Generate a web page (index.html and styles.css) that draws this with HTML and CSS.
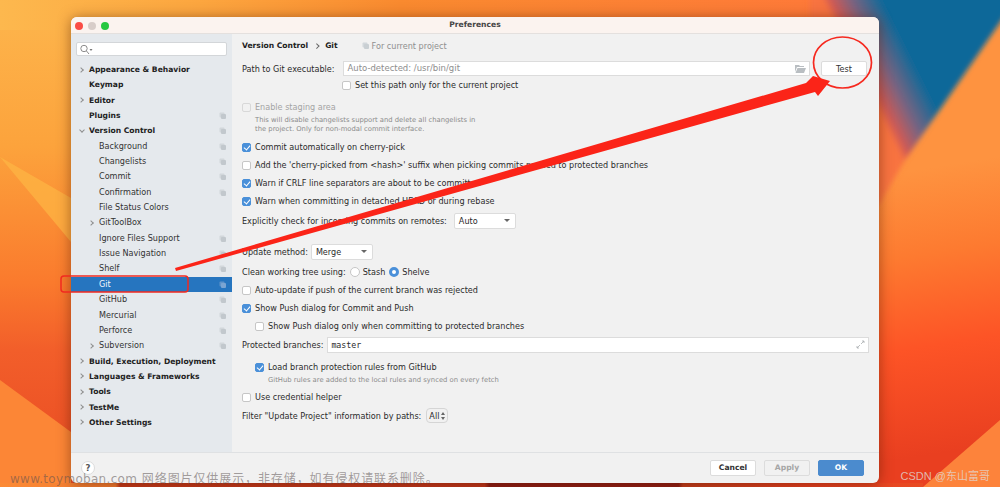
FILE: index.html
```html
<!DOCTYPE html>
<html lang="en">
<head>
    <meta charset="UTF-8">
    <title>Preferences</title>
    <link rel="stylesheet" href="styles.css">
</head>
<body>
    <svg class="wallpaper" width="1000" height="487" viewBox="0 0 1000 487">
        <defs>
            <linearGradient id="base" x1="0" y1="0" x2="0" y2="1">
                <stop offset="0" stop-color="#fdb64d"/>
                <stop offset=".3" stop-color="#fca33c"/>
                <stop offset=".58" stop-color="#fa7a2d"/>
                <stop offset=".72" stop-color="#f25e2a"/>
                <stop offset="1" stop-color="#e84a22"/>
            </linearGradient>
            <linearGradient id="top" x1="0" y1="0" x2="1" y2="0">
                <stop offset="0" stop-color="#fdb84e"/>
                <stop offset=".2" stop-color="#fca63f"/>
                <stop offset=".4" stop-color="#f98a2f"/>
                <stop offset=".8" stop-color="#fe7a38"/>
                <stop offset="1" stop-color="#f06a45"/>
            </linearGradient>
            <linearGradient id="blue" gradientUnits="userSpaceOnUse" x1="822" y1="0" x2="870" y2="-24">
                <stop offset="0" stop-color="#f87340"/>
                <stop offset=".15" stop-color="#cf5a55"/>
                <stop offset=".5" stop-color="#7a6480"/>
                <stop offset="1" stop-color="#0f6899"/>
            </linearGradient>
            <linearGradient id="flame" gradientUnits="userSpaceOnUse" x1="915" y1="170" x2="960" y2="450">
                <stop offset="0" stop-color="#fe9340"/>
                <stop offset=".3" stop-color="#fd7a30"/>
                <stop offset=".62" stop-color="#fd5426"/>
                <stop offset="1" stop-color="#e93f20"/>
            </linearGradient>
            <linearGradient id="strip" x1="0" y1="0" x2="1" y2="0">
                <stop offset="0" stop-color="#fc8a35"/>
                <stop offset=".125" stop-color="#f07a30"/>
                <stop offset=".13" stop-color="#c4381a"/>
                <stop offset=".525" stop-color="#be341b"/>
                <stop offset=".53" stop-color="#8a1a14"/>
                <stop offset=".735" stop-color="#8e1c14"/>
                <stop offset=".74" stop-color="#c03c1c"/>
                <stop offset=".88" stop-color="#e53e20"/>
                <stop offset="1" stop-color="#e84a22"/>
            </linearGradient>
            <filter id="soft"><feGaussianBlur stdDeviation="2.500"/></filter>
        </defs>
        <rect width="1000" height="487" fill="url(#base)"/>
        <rect width="1000" height="30" fill="url(#top)"/>
        <polygon points="0,157 71,198 71,242" fill="#fdb644" opacity=".7"/>
        <polygon points="0,380 71,432 71,487 0,487" fill="#fc8636"/>
        <rect x="860" y="0" width="140" height="487" fill="url(#flame)"/>
        <polygon points="810,-10 1010,-10 1010,8 905,160 879,205 810,205" fill="url(#blue)" filter="url(#soft)"/>
        <polygon points="1000,420 1000,487 923,487" fill="#fd833b"/>
        <rect y="483" width="923" height="4" fill="url(#strip)"/>
    </svg>

    <div class="window">
        <div class="titlebar">
            <div class="lights"><i class="light red"></i><i class="light grey"></i><i class="light green"></i></div>
            <span>Preferences</span>
        </div>
        <div class="main">
            <aside class="sidebar">
                <div class="search">
                    <svg width="13" height="11" viewBox="0 0 13 11"><circle cx="4" cy="4.500" r="3.200" fill="none" stroke="#8b8b8b"/><path d="M6.500 7l2.500 3" stroke="#8b8b8b"/><path d="M9.500 5h3l-1.500 2z" fill="#777"/></svg>
                </div>
                <ul class="tree">
                    <li class="bold"><i class="arrow"></i>Appearance &amp; Behavior</li>
                    <li class="bold">Keymap</li>
                    <li class="bold"><i class="arrow"></i>Editor</li>
                    <li class="bold copy">Plugins</li>
                    <li class="bold copy"><i class="arrow open"></i>Version Control</li>
                    <li class="sub copy">Background</li>
                    <li class="sub copy">Changelists</li>
                    <li class="sub copy">Commit</li>
                    <li class="sub copy">Confirmation</li>
                    <li class="sub">File Status Colors</li>
                    <li class="sub"><i class="arrow"></i>GitToolBox</li>
                    <li class="sub copy">Ignore Files Support</li>
                    <li class="sub copy">Issue Navigation</li>
                    <li class="sub copy">Shelf</li>
                    <li class="sub copy selected">Git</li>
                    <li class="sub copy">GitHub</li>
                    <li class="sub copy">Mercurial</li>
                    <li class="sub copy">Perforce</li>
                    <li class="sub copy"><i class="arrow"></i>Subversion</li>
                    <li class="bold"><i class="arrow"></i>Build, Execution, Deployment</li>
                    <li class="bold"><i class="arrow"></i>Languages &amp; Frameworks</li>
                    <li class="bold"><i class="arrow"></i>Tools</li>
                    <li class="bold"><i class="arrow"></i>TestMe</li>
                    <li class="bold"><i class="arrow"></i>Other Settings</li>
                </ul>
            </aside>
            <section class="content">
                <div class="crumbs"><b>Version Control</b><i class="crumb-sep"></i><b>Git</b><span class="scope">For current project</span></div>
                <div class="row path-row">
                    <label>Path to Git executable:</label>
                    <div class="field path-field">Auto-detected: /usr/bin/git
                        <svg class="folder" width="11" height="9" viewBox="0 0 11 9"><path d="M0 1h4l1 1h4v1H2L0 8zM2.500 4H11L9 9H.5z" fill="#b9bec2"/></svg>
                    </div>
                    <button class="btn test">Test</button>
                </div>
                <div class="check path-only"><i class="box"></i>Set this path only for the current project</div>
                <div class="check disabled staging"><i class="box"></i>Enable staging area</div>
                <p class="hint staging-hint">This will disable changelists support and delete all changelists in<br>the project. Only for non-modal commit interface.</p>
                <div class="check cherry"><i class="box on"></i>Commit automatically on cherry-pick</div>
                <div class="check gap"><i class="box"></i>Add the 'cherry-picked from &lt;hash&gt;' suffix when picking commits pushed to protected branches</div>
                <div class="check gap"><i class="box on"></i>Warn if CRLF line separators are about to be committed</div>
                <div class="check gap"><i class="box on"></i>Warn when committing in detached HEAD or during rebase</div>
                <div class="row remotes"><label>Explicitly check for incoming commits on remotes:</label><div class="select auto">Auto</div></div>
                <div class="row update"><label>Update method:</label><div class="select merge">Merge</div></div>
                <div class="row clean"><label>Clean working tree using:</label><i class="radio"></i>Stash<i class="radio on"></i>Shelve</div>
                <div class="check gap"><i class="box"></i>Auto-update if push of the current branch was rejected</div>
                <div class="check gap"><i class="box on"></i>Show Push dialog for Commit and Push</div>
                <div class="check gap indent"><i class="box"></i>Show Push dialog only when committing to protected branches</div>
                <div class="row protected"><label>Protected branches:</label>
                    <div class="field mono">master
                        <svg class="expand" width="9" height="9" viewBox="0 0 9 9"><path d="M5 4l3-3M6 1h2v2M4 5L1 8M1 6v2h2" fill="none" stroke="#a9adb0" stroke-width=".8"/></svg>
                    </div>
                </div>
                <div class="check indent load"><i class="box on"></i>Load branch protection rules from GitHub</div>
                <p class="hint indent-hint">GitHub rules are added to the local rules and synced on every fetch</p>
                <div class="check credential"><i class="box"></i>Use credential helper</div>
                <div class="row filter"><label>Filter "Update Project" information by paths:</label>
                    <div class="stepper">All<svg width="4" height="8" viewBox="0 0 4 8"><path d="M2 0l2 3H0zM2 8L0 5h4z" fill="#666"/></svg></div>
                </div>
            </section>
        </div>
        <div class="footer">
            <div class="help">?</div>
            <div class="actions">
                <button class="btn">Cancel</button>
                <button class="btn off">Apply</button>
                <button class="btn primary">OK</button>
            </div>
        </div>
    </div>

    <svg class="marks" width="1000" height="487" viewBox="0 0 1000 487">
        <rect x="61" y="276" width="127" height="16" rx="3" fill="none" stroke="#f12a20" stroke-width="1.500"/>
        <ellipse cx="842.500" cy="62.500" rx="29" ry="25.500" fill="none" stroke="#f6291f" stroke-width="1.700"/>
        <path d="M175 268L806 83 813 76 830 81 818 96 815 92 176 271z" fill="#fb2418"/>
    </svg>

    <div class="stamp"><span class="url">www.toymoban.com</span> 网络图片仅供展示，非存储，如有侵权请联系删除。</div>
    <div class="csdn">CSDN @东山富哥</div>
</body>
</html>
```
FILE: styles.css
```css
* {
    box-sizing: border-box;
}
html, body {
    margin: 0;
    height: 487px;
    overflow: hidden;
}
body {
    position: relative;
    font-family: "DejaVu Sans", "Noto Sans CJK SC", sans-serif;
    font-size: 8.1px;
    color: #2b2b2b;
    padding: 17px 121px 4px 71px;
}

.wallpaper {
    position: absolute;
    left: 0;
    top: 0;
}

/* window */
.window {
    position: relative;
    height: 466px;
    display: flex;
    flex-direction: column;
    border-radius: 6px;
    overflow: hidden;
    background: #f1f1f1;
    box-shadow: 0 1px 13px rgba(80, 25, 0, 0.5);
}
.titlebar {
    position: relative;
    height: 17px;
    flex: none;
    background: #fbf3ef;
    border-bottom: 1px solid #e4e0de;
    text-align: center;
    line-height: 16px;
    font-weight: bold;
    font-size: 7.6px;
    color: #444;
}
.lights {
    position: absolute;
    left: 4px;
    top: 4.5px;
    display: flex;
    gap: 5px;
}
.light {
    width: 8px;
    height: 8px;
    border-radius: 50%;
}
.light.red { background: #fa4c45; }
.light.grey { background: #d8cdc9; }
.light.green { background: #27c840; }

.main {
    flex: 1;
    display: flex;
    min-height: 0;
}
.sidebar {
    width: 161px;
    flex: none;
    background: #e5e9ed;
    padding: 8px 5px 0;
}
.search {
    height: 14px;
    width: 151px;
    background: #fff;
    border: 1px solid #d3d6d9;
    border-radius: 2px;
    padding: 0 3px;
}
.search svg {
    display: block;
    margin-top: 1px;
}
.tree {
    list-style: none;
    margin: 6px -5px 0;
    padding: 0;
}
.tree li {
    position: relative;
    height: 15.35px;
    line-height: 15px;
    padding-left: 18px;
    white-space: nowrap;
}
.tree .bold {
    font-weight: bold;
    font-size: 7.6px;
    color: #222;
}
.tree .sub {
    padding-left: 28px;
    color: #333;
}
.tree .selected {
    background: #2675bf;
    color: #f4f7fa;
}
.arrow {
    position: absolute;
    left: 7.5px;
    top: 5.5px;
    width: 4px;
    height: 4px;
    border: solid #8f8f8f;
    border-width: 1px 1px 0 0;
    transform: rotate(45deg);
}
.arrow.open {
    left: 9px;
    top: 4.5px;
    transform: rotate(135deg);
}
.sub .arrow {
    left: 17.5px;
}
.copy::after, .scope::before {
    content: "";
    width: 5px;
    height: 5px;
    background: #c2c8cd;
    border-radius: 1px;
    box-shadow: -1.5px -1.5px 0 0 #d2d7db;
}
.copy::after {
    position: absolute;
    right: 6px;
    top: 6px;
}
.tree .selected::after {
    background: #7ba5d2;
    box-shadow: -1.5px -1.5px 0 0 #5f93c9;
}

/* settings form */
.content {
    flex: 1;
    min-width: 0;
    padding: 6px 10px 0 10px;
}
.crumbs {
    height: 12px;
    line-height: 12px;
    display: flex;
    align-items: center;
    font-size: 7.6px;
    color: #222;
}
.crumb-sep {
    width: 3.5px;
    height: 3.5px;
    margin: 0 7px 0 6.5px;
    border: solid #666;
    border-width: 1px 1px 0 0;
    transform: rotate(45deg);
}
.scope {
    display: flex;
    align-items: center;
    margin-left: 26px;
    font-size: 8.1px;
    color: #8f8f8f;
}
.scope::before {
    margin-right: 3px;
    background: #c9cfd3;
}
.row {
    display: flex;
    align-items: center;
    white-space: nowrap;
}
.path-row {
    margin-top: 9px;
    height: 15px;
}
.field {
    position: relative;
    flex: 1;
    height: 15px;
    line-height: 13px;
    background: #fff;
    border: 1px solid #dcdcdc;
    padding-left: 3px;
}
.path-field {
    margin-left: 9px;
    font-size: 8.5px;
    color: #8e8e8e;
}
.folder, .expand {
    position: absolute;
    right: 3px;
    top: 2px;
}
.btn {
    font: inherit;
    height: 15px;
    line-height: 12px;
    padding: 0;
    background: #fff;
    border: 1px solid #dcdcdc;
    border-radius: 2px;
    color: #333;
}
.test {
    width: 46px;
    margin: 0 2px 0 11px;
}
.check {
    display: flex;
    align-items: center;
    height: 12px;
    white-space: nowrap;
}
.box {
    flex: none;
    width: 9px;
    height: 9px;
    margin-right: 4px;
    background: #fff;
    border: 1px solid #c6c6c6;
    border-radius: 2px;
}
.box.on {
    background: #4a90d9;
    border-color: #4a90d9;
    position: relative;
}
.box.on::after {
    content: "";
    position: absolute;
    left: 2px;
    top: 0;
    width: 3px;
    height: 5px;
    border: solid #fff;
    border-width: 0 1.200px 1.200px 0;
    transform: rotate(40deg);
}
.path-only {
    margin: 3px 0 0 100px;
}
.disabled {
    color: #a4a4a4;
}
.disabled .box {
    background: transparent;
    border-color: #d8d8d8;
}
.staging {
    margin-top: 10px;
}
.hint {
    margin: 0;
    font-size: 6.8px;
    color: #8b8b8b;
}
.staging-hint {
    margin: 3px 0 0 13px;
    line-height: 9px;
}
.gap {
    margin-top: 6px;
}
.cherry {
    margin-top: 7px;
}
.select {
    position: relative;
    height: 16px;
    line-height: 14px;
    background: #fff;
    border: 1px solid #dcdcdc;
    border-radius: 2px;
    padding-left: 4px;
}
.select::after {
    content: "";
    position: absolute;
    right: 5px;
    top: 5px;
    border: 3px solid transparent;
    border-top: 3px solid #666;
}
.auto, .merge {
    width: 62px;
}
.auto {
    margin-left: 7px;
}
.merge {
    margin-left: 3px;
}
.remotes {
    margin-top: 6px;
    height: 16px;
}
.update {
    margin-top: 15px;
    height: 16px;
}
.clean {
    margin-top: 6px;
    height: 12px;
}
.radio {
    width: 10px;
    height: 10px;
    margin: 0 3px 0 4px;
    background: #fff;
    border: 1px solid #c6c6c6;
    border-radius: 50%;
}
.radio.on {
    border: 3px solid #4a90d9;
}
.indent {
    margin-left: 13px;
}
.protected {
    margin-top: 5px;
    height: 16px;
}
.protected .field {
    margin-left: 4px;
    height: 16px;
    line-height: 14px;
}
.mono {
    font-family: "DejaVu Sans Mono", monospace;
    font-size: 8.3px;
}
.load {
    margin-top: 8px;
}
.indent-hint {
    margin: 2px 0 0 26px;
    line-height: 10px;
}
.credential {
    margin-top: 6px;
}
.filter {
    margin-top: 5px;
    height: 15px;
}
.stepper {
    display: flex;
    align-items: center;
    justify-content: space-between;
    margin-left: 5px;
    width: 22px;
    height: 15px;
    border: 1px solid #d5d5d5;
    border-radius: 4px;
    padding: 0 2px;
}

/* bottom bar */
.footer {
    height: 31px;
    flex: none;
    display: flex;
    align-items: center;
    justify-content: space-between;
    padding: 0 15px 0 10px;
    border-top: 1px solid #dfe1e3;
}
.help {
    width: 14px;
    height: 14px;
    background: #fff;
    border: 1px solid #dcdcdc;
    border-radius: 50%;
    text-align: center;
    line-height: 12px;
    font-size: 8.5px;
    font-weight: bold;
    color: #555;
}
.actions {
    display: flex;
    gap: 7px;
}
.actions .btn {
    width: 46px;
    height: 16px;
    font-size: 7.6px;
    font-weight: bold;
}
.primary, .off {
    margin-left: 1px;
}
.actions .off {
    background: #f1f1f1;
    color: #a5a5a5;
}
.actions .primary {
    background: #4b8bce;
    border-color: #4b8bce;
    color: #fff;
}

/* annotations on top of the screenshot */
.marks {
    position: absolute;
    left: 0;
    top: 0;
}
.stamp {
    position: absolute;
    left: 10px;
    top: 469px;
    font-size: 12px;
    letter-spacing: 0.9px;
    color: rgba(90, 80, 80, 0.55);
    white-space: nowrap;
}
.url {
    letter-spacing: 0.3px;
}
.csdn {
    position: absolute;
    right: 10px;
    top: 467px;
    font-family: "Liberation Sans", "Noto Sans CJK SC", sans-serif;
    font-size: 11px;
    color: rgba(225, 215, 210, 0.8);
    white-space: nowrap;
}
```
